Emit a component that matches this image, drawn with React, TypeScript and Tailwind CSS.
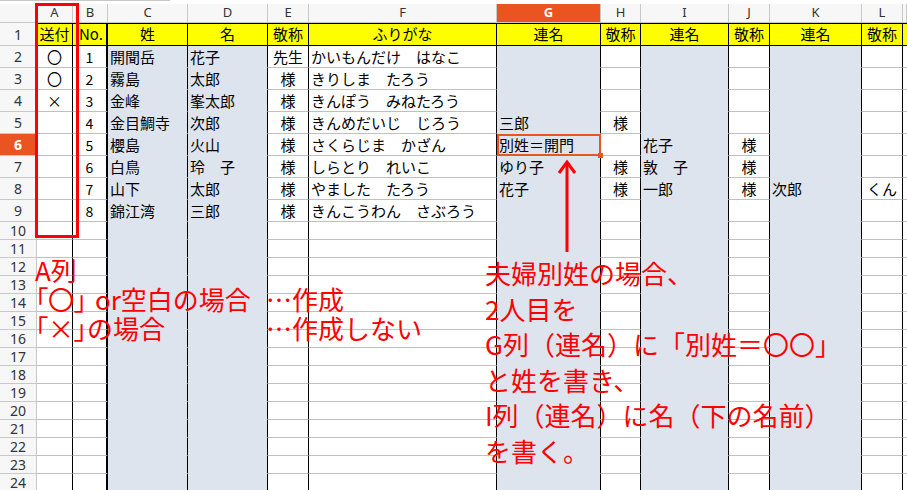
const LETTERS = ["A", "B", "C", "D", "E", "F", "G", "H", "I", "J", "K", "L", ""];

// per-column look: fill colour and black right rule
const COLS = [
  { fill: false, center: true, rule: "border-r border-r-black" },
  { fill: false, center: true, rule: "border-r-2 border-r-black" },
  { fill: true, center: false, rule: "border-r border-r-black" },
  { fill: true, center: false, rule: "border-r border-r-black" },
  { fill: false, center: true, rule: "border-r border-r-black" },
  { fill: false, center: false, rule: "border-r border-r-black" },
  { fill: true, center: false, rule: "border-r border-r-black" },
  { fill: false, center: true, rule: "border-r border-r-black" },
  { fill: true, center: false, rule: "border-r border-r-black" },
  { fill: false, center: true, rule: "border-r border-r-black" },
  { fill: true, center: false, rule: "border-r border-r-black" },
  { fill: false, center: true, rule: "border-r border-r-black" },
  { fill: false, center: false, rule: "" },
];

const HEAD = ["送付", "No.", "姓", "名", "敬称", "ふりがな", "連名", "敬称", "連名", "敬称", "連名", "敬称", ""];

const DATA: string[][] = [
  ["〇", "1", "開聞岳", "花子", "先生", "かいもんだけ　はなこ", "", "", "", "", "", "", ""],
  ["〇", "2", "霧島", "太郎", "様", "きりしま　たろう", "", "", "", "", "", "", ""],
  ["×", "3", "金峰", "峯太郎", "様", "きんぽう　みねたろう", "", "", "", "", "", "", ""],
  ["", "4", "金目鯛寺", "次郎", "様", "きんめだいじ　じろう", "三郎", "様", "", "", "", "", ""],
  ["", "5", "櫻島", "火山", "様", "さくらじま　かざん", "別姓＝開門", "", "花子", "様", "", "", ""],
  ["", "6", "白鳥", "玲　子", "様", "しらとり　れいこ", "ゆり子", "様", "敦　子", "様", "", "", ""],
  ["", "7", "山下", "太郎", "様", "やました　たろう", "花子", "様", "一郎", "様", "次郎", "くん", ""],
  ["", "8", "錦江湾", "三郎", "様", "きんこうわん　さぶろう", "", "", "", "", "", "", ""],
];

const EMPTY_ROWS = Array.from({ length: 15 }, (_, i) => i + 10);

function RowHead({ n, h }: { n: number; h: string }) {
  const active = n === 6;
  return (
    <div
      className={`${h} flex items-center justify-center border-r border-b border-[#c8c8c8] font-['Noto_Sans',sans-serif] text-[14px] ${
        active ? "bg-[#e95420] font-bold text-white" : "bg-[#f7f7f7] text-[#333]"
      }`}
    >
      {n}
    </div>
  );
}

function Cell({ col, text, h, selected }: { col: number; text: string; h: string; selected?: boolean }) {
  const c = COLS[col];
  const bg = c.fill ? "bg-[#dde4ee] border-b-[#dde4ee]" : "bg-white border-b-[#c0c0c0]";
  const align = c.center ? "justify-center" : "justify-start pl-[2px]";
  const num = col === 1 ? "text-[14px]" : "text-[15px]";
  return (
    <div className={`${h} relative flex items-end overflow-visible whitespace-nowrap border-b ${bg} ${c.rule} ${align} ${num} leading-[20px] text-black`}>
      {text}
      {selected && (
        <div className="absolute left-0 top-0 -right-[1px] -bottom-[1px] z-10 border-2 border-[#e95420]">
          <div className="absolute -right-[4px] -bottom-[4px] h-[5px] w-[5px] bg-[#e95420]" />
        </div>
      )}
    </div>
  );
}

export default function App() {
  return (
    <div className="relative h-[490px] w-[907px] overflow-hidden bg-white font-['Noto_Sans_CJK_JP','Noto_Sans',sans-serif]">
      <div className="h-[4px] w-[170px] border-t border-[#c8c8c8]" />
      <div className="grid grid-cols-[37px_36px_35px_80px_80px_41px_188px_104px_40px_88px_41px_92px_41px_1fr]">
        {/* column letters */}
        <div className="h-[19px] border-r border-b border-[#c8c8c8] bg-[#f7f7f7]" />
        {LETTERS.map((l, i) => (
          <div
            key={`h${i}`}
            className={`flex h-[19px] items-center justify-center border-r border-b border-[#c8c8c8] font-['Noto_Sans',sans-serif] text-[13px] ${
              l === "G" ? "bg-[#e95420] font-bold text-white" : "bg-[#f7f7f7] text-[#333]"
            }`}
          >
            {l}
          </div>
        ))}

        {/* row 1: yellow titles */}
        <RowHead n={1} h="h-[23px]" />
        {HEAD.map((t, i) => (
          <div
            key={`t${i}`}
            className={`flex h-[23px] items-center whitespace-nowrap border-y border-black bg-[#ffff00] text-[15px] text-black ${COLS[i].rule} ${
              i === 1 ? "justify-start pl-[6px]" : "justify-center"
            }`}
          >
            {t}
          </div>
        ))}

        {/* rows 2-9 */}
        {DATA.map((r, ri) => (
          <div key={`r${ri}`} className="contents">
            <RowHead n={ri + 2} h="h-[22px]" />
            {r.map((t, ci) => (
              <Cell key={ci} col={ci} text={t} h="h-[22px]" selected={ri === 4 && ci === 6} />
            ))}
          </div>
        ))}

        {/* empty rows */}
        {EMPTY_ROWS.map((n) => (
          <div key={`e${n}`} className="contents">
            <RowHead n={n} h="h-[18px]" />
            {COLS.map((_, ci) => (
              <Cell key={ci} col={ci} text="" h="h-[18px]" />
            ))}
          </div>
        ))}
      </div>

      {/* red frame round column A */}
      <div className="absolute left-[35px] top-[3px] h-[235px] w-[44px] border-[3px] border-[#ff0000]" />

      {/* arrow pointing at G6 */}
      <svg className="absolute left-[555px] top-[155px]" width="25" height="100" viewBox="0 0 25 100">
        <path d="M12 8 L12 97" stroke="#ff0000" strokeWidth="3" fill="none" />
        <path d="M4 18 L12 7 L20 18" stroke="#ff0000" strokeWidth="3" fill="none" strokeLinejoin="miter" />
      </svg>

      {/* note on column A */}
      <div className="absolute left-[35px] top-[255px] whitespace-nowrap text-[26px] leading-[29px] text-[#ff0000]">
        <div>A列</div>
        <div className="flex">
          <span className="w-[231px] shrink-0">
            <span className="mr-[8px] [font-feature-settings:'palt']">「〇」</span>or空白の場合
          </span>
          <span>…作成</span>
        </div>
        <div className="flex">
          <span className="w-[231px] shrink-0">
            <span className="[font-feature-settings:'palt']">「×」</span>の場合
          </span>
          <span>…作成しない</span>
        </div>
      </div>

      {/* note on separate surnames */}
      <div className="absolute left-[485px] top-[255px] whitespace-nowrap text-[26px] leading-[35.6px] text-[#ff0000]">
        <div>夫婦別姓の場合、</div>
        <div>2人目を</div>
        <div>G列（連名）に「別姓＝〇〇」</div>
        <div>と姓を書き、</div>
        <div>I列（連名）に名（下の名前）</div>
        <div>を書く。</div>
      </div>
    </div>
  );
}
